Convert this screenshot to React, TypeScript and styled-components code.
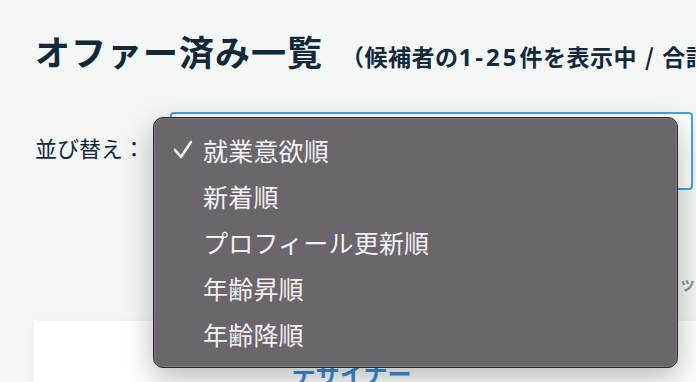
import styled, { createGlobalStyle } from "styled-components";

const GlobalStyle = createGlobalStyle`
  html, body {
    margin: 0;
    padding: 0;
    width: 696px;
    height: 382px;
    overflow: hidden;
    background: #f5f7f7;
    font-family: "Noto Sans CJK JP", "Noto Sans", sans-serif;
  }
`;

const Page = styled.div`
  position: relative;
  width: 1000px;
  height: 382px;
  padding: 33px 0 0 35px;
  box-sizing: border-box;
  color: #13293a;
`;

const Header = styled.div`
  display: flex;
  align-items: baseline;
  gap: 18px;
  white-space: nowrap;
`;

const Title = styled.h1`
  margin: 0;
  font-size: 35px;
  line-height: 1;
  font-weight: 700;
  letter-spacing: 1px;
`;

const Count = styled.span`
  font-size: 23px;
  font-weight: 700;
  letter-spacing: 0.5px;
`;

const Num = styled.span`
  font-family: "Open Sans", "Noto Sans CJK JP", sans-serif;
  font-size: 24px;
  letter-spacing: 3px;
`;

const Slash = styled.span`
  padding: 0 8px;
`;

const SortRow = styled.div`
  position: relative;
  display: flex;
  align-items: center;
  margin-top: 39px;
`;

const SortLabel = styled.span`
  width: 135px;
  margin-bottom: 8px;
  font-size: 22px;
  line-height: 1;
`;

const SelectBox = styled.div`
  width: 523px;
  height: 78px;
  box-sizing: border-box;
  border: 2px solid #4a9fe6;
  border-radius: 4px;
  background: #fdfefe;
`;

const Menu = styled.ul`
  position: absolute;
  left: 118px;
  top: 5px;
  z-index: 10;
  width: 525px;
  height: 251px;
  margin: 0;
  padding: 9px 0 0;
  box-sizing: border-box;
  list-style: none;
  background: #6a666b;
  border: 1px solid #2b2a2d;
  border-radius: 10px;
  box-shadow: inset 0 0 0 1px rgba(255, 255, 255, 0.12),
    0 10px 30px rgba(0, 0, 0, 0.28);
`;

const MenuItem = styled.li`
  position: relative;
  height: 46px;
  padding-left: 49px;
  display: flex;
  align-items: center;
  font-size: 25px;
  color: #f3f1f3;
  letter-spacing: 0.2px;
`;

const Check = styled.svg`
  position: absolute;
  left: 19px;
  top: 13px;
`;

const ToolRow = styled.div`
  display: flex;
  justify-content: flex-end;
  width: 661px;
  margin-top: 80px;
  white-space: nowrap;
  overflow: hidden;
`;

const ToolText = styled.span`
  font-size: 17px;
  font-weight: 700;
  color: #8b9ba3;
`;

const Card = styled.div`
  margin: 26px 0 0 -1px;
  width: 900px;
  height: 80px;
  background: #ffffff;
  box-shadow: 0 0 8px rgba(0, 0, 0, 0.03);
  padding: 40px 0 0 258px;
  box-sizing: border-box;
`;

const JobTitle = styled.span`
  font-size: 24px;
  font-weight: 700;
  color: #3a8fd8;
  line-height: 1;
`;

const options = ["就業意欲順", "新着順", "プロフィール更新順", "年齢昇順", "年齢降順"];

export default function App() {
  return (
    <>
      <GlobalStyle />
      <Page>
        <Header>
          <Title>オファー済み一覧</Title>
          <Count>
            （候補者の<Num>1-25</Num>件を表示中<Slash>/</Slash>合計<Num>30</Num>件）
          </Count>
        </Header>
        <SortRow>
          <SortLabel>並び替え：</SortLabel>
          <SelectBox />
          <Menu>
            {options.map((o, i) => (
              <MenuItem key={o}>
                {i === 0 && (
                  <Check width="20" height="20" viewBox="0 0 20 20">
                    <polyline
                      points="2,10 8,17 18,2"
                      fill="none"
                      stroke="#f3f1f3"
                      strokeWidth="2.6"
                      strokeLinecap="round"
                      strokeLinejoin="round"
                    />
                  </Check>
                )}
                {o}
              </MenuItem>
            ))}
          </Menu>
        </SortRow>
        <ToolRow>
          <ToolText>すべてチェ ッ</ToolText>
        </ToolRow>
        <Card>
          <JobTitle>デザイナー</JobTitle>
        </Card>
      </Page>
    </>
  );
}
